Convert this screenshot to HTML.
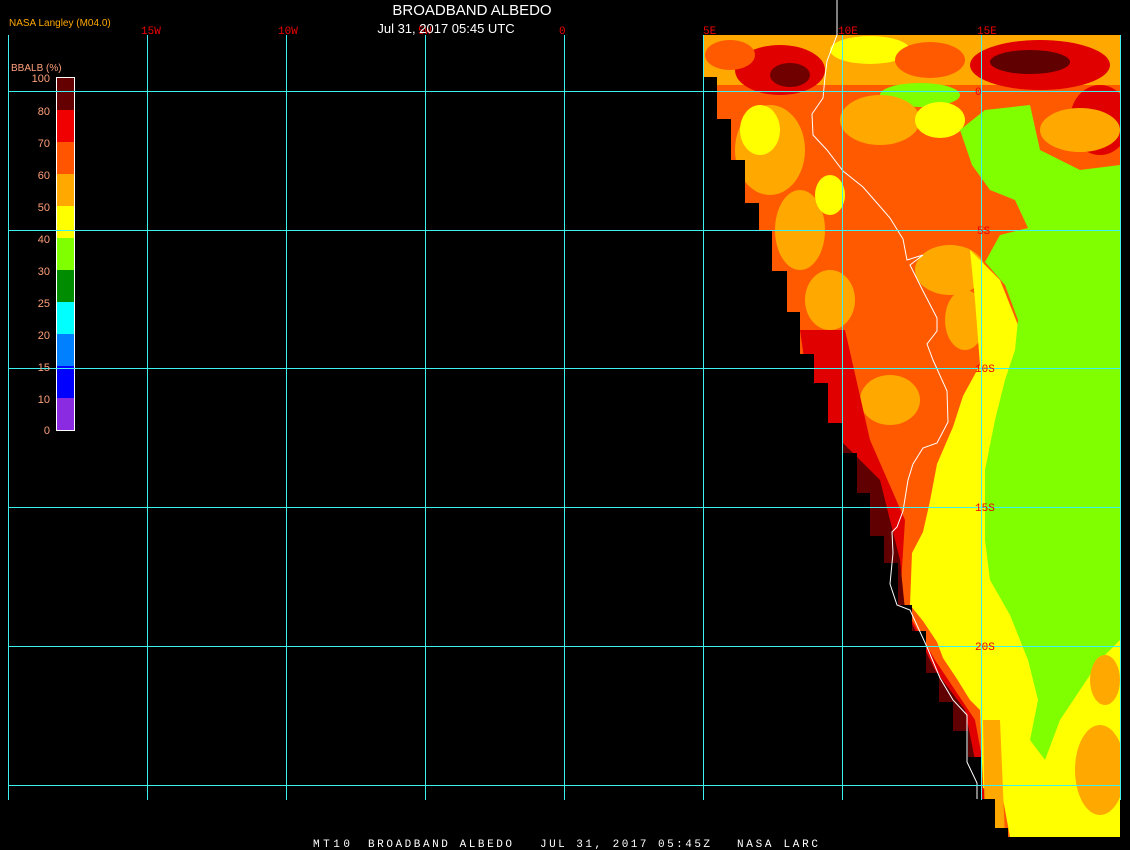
<!DOCTYPE html>
<html><head><meta charset="utf-8"><style>
html,body{margin:0;padding:0;background:#000;width:1130px;height:850px;overflow:hidden}
svg{display:block}
text{font-family:"Liberation Sans",sans-serif}
.m{font-family:"Liberation Mono",monospace}
</style></head><body>
<svg width="1130" height="850" viewBox="0 0 1130 850" xmlns="http://www.w3.org/2000/svg">
<rect width="1130" height="850" fill="#000"/>
<defs>
<clipPath id="land"><polygon points="703,35 703,77 717,77 717,119 731,119 731,160 745,160 745,203 759,203 759,230 772,230 772,271 787,271 787,312 800,312 800,354 814,354 814,383 828,383 828,423 843,423 843,453 857,453 857,493 870,493 870,536 884,536 884,563 898,563 898,605 912,605 912,631 926,631 926,673 939,673 939,702 953,702 953,731 968,731 968,757 981,757 981,799 995,799 995,828 1008,828 1008,837 1120,837 1120,35"/></clipPath>
</defs>
<g clip-path="url(#land)">
<rect x="700" y="35" width="420" height="802" fill="#ff5a00"/>
<rect x="700" y="35" width="420" height="50" fill="#ffa800"/>
<ellipse cx="780" cy="70" rx="45" ry="25" fill="#e00000"/>
<ellipse cx="790" cy="75" rx="20" ry="12" fill="#700000"/>
<ellipse cx="1040" cy="65" rx="70" ry="25" fill="#e00000"/>
<ellipse cx="1030" cy="62" rx="40" ry="12" fill="#600000"/>
<ellipse cx="1100" cy="120" rx="30" ry="35" fill="#e00000"/>
<ellipse cx="870" cy="50" rx="40" ry="14" fill="#ffff00"/>
<ellipse cx="730" cy="55" rx="25" ry="15" fill="#ff5a00"/>
<ellipse cx="930" cy="60" rx="35" ry="18" fill="#ff5a00"/>
<ellipse cx="920" cy="95" rx="40" ry="12" fill="#80ff00"/>
<ellipse cx="770" cy="150" rx="35" ry="45" fill="#ffa800"/>
<ellipse cx="760" cy="130" rx="20" ry="25" fill="#ffff00"/>
<ellipse cx="800" cy="230" rx="25" ry="40" fill="#ffa800"/>
<ellipse cx="830" cy="300" rx="25" ry="30" fill="#ffa800"/>
<ellipse cx="830" cy="195" rx="15" ry="20" fill="#ffff00"/>
<ellipse cx="880" cy="120" rx="40" ry="25" fill="#ffa800"/>
<ellipse cx="940" cy="120" rx="25" ry="18" fill="#ffff00"/>
<ellipse cx="950" cy="270" rx="35" ry="25" fill="#ffa800"/>
<ellipse cx="965" cy="320" rx="20" ry="30" fill="#ffa800"/>
<ellipse cx="890" cy="400" rx="30" ry="25" fill="#ffa800"/>
<polygon points="800,330 845,330 870,440 905,520 900,600 935,660 975,720 990,800 1000,837 940,837 850,480 810,400" fill="#e00000"/>
<polygon points="840,440 880,480 900,560 905,610 935,670 965,710 975,760 940,760 900,640 870,560 850,500" fill="#600000"/>
<polygon points="980,365 963,396 953,427 937,464 930,501 923,532 912,553 910,605 923,621 937,642 943,658 957,679 970,700 980,710 983,788 1003,799 1010,837 1120,837 1120,350 1040,340 1020,330 1000,280 970,250 975,300" fill="#ffff00"/>
<polygon points="983,720 1000,720 1005,837 985,837" fill="#ffa800"/>
<polygon points="960,130 985,110 1030,105 1040,150 1080,170 1120,165 1120,640 1100,660 1080,690 1060,720 1045,760 1030,740 1038,700 1028,660 1010,615 990,580 985,540 985,470 995,420 1005,380 1015,350 1018,320 1005,285 985,262 1000,235 1028,228 1015,200 990,190 972,165" fill="#80ff00"/>
<ellipse cx="1080" cy="130" rx="40" ry="22" fill="#ffa800"/>
<ellipse cx="1100" cy="770" rx="25" ry="45" fill="#ffa800"/>
<ellipse cx="1105" cy="680" rx="15" ry="25" fill="#ffa800"/>
</g>
<polyline fill="none" stroke="#fff" stroke-width="1" points="837,0 837,35 827,61 825,77 823,98 812,114 813,135 827,150 843,171 863,187 877,203 890,218 903,239 907,260 923,255 910,265 923,291 937,318 937,331 927,344 933,360 947,391 948,422 937,443 923,448 913,464 908,480 903,511 897,527 892,532 893,553 890,584 897,605 910,610 927,647 940,678 953,700 967,715 967,762 977,783 977,799"/>
<g stroke="#3ff0f0" stroke-width="1">
<line x1="8.5" y1="35" x2="8.5" y2="800"/>
<line x1="147.5" y1="35" x2="147.5" y2="800"/>
<line x1="286.5" y1="35" x2="286.5" y2="800"/>
<line x1="425.5" y1="35" x2="425.5" y2="800"/>
<line x1="564.5" y1="35" x2="564.5" y2="800"/>
<line x1="703.5" y1="35" x2="703.5" y2="800"/>
<line x1="842.5" y1="35" x2="842.5" y2="800"/>
<line x1="981.5" y1="35" x2="981.5" y2="800"/>
<line x1="1120.5" y1="35" x2="1120.5" y2="800"/>
<line x1="8" y1="91.5" x2="1120" y2="91.5"/>
<line x1="8" y1="230.5" x2="1120" y2="230.5"/>
<line x1="8" y1="368.5" x2="1120" y2="368.5"/>
<line x1="8" y1="507.5" x2="1120" y2="507.5"/>
<line x1="8" y1="646.5" x2="1120" y2="646.5"/>
<line x1="8" y1="785.5" x2="1120" y2="785.5"/>
</g>
<rect x="56" y="78" width="18" height="32" fill="#640000"/>
<rect x="56" y="110" width="18" height="32" fill="#f00000"/>
<rect x="56" y="142" width="18" height="32" fill="#ff5500"/>
<rect x="56" y="174" width="18" height="32" fill="#ffa800"/>
<rect x="56" y="206" width="18" height="32" fill="#ffff00"/>
<rect x="56" y="238" width="18" height="32" fill="#80ff00"/>
<rect x="56" y="270" width="18" height="32" fill="#008c00"/>
<rect x="56" y="302" width="18" height="32" fill="#00ffff"/>
<rect x="56" y="334" width="18" height="32" fill="#0080ff"/>
<rect x="56" y="366" width="18" height="32" fill="#0000ff"/>
<rect x="56" y="398" width="18" height="32" fill="#8a2be2"/>
<rect x="56.5" y="77.5" width="18" height="353" fill="none" stroke="#fff" stroke-width="1"/>
<line x1="8" y1="91.5" x2="75" y2="91.5" stroke="#3ff0f0"/>
<line x1="8" y1="230.5" x2="75" y2="230.5" stroke="#3ff0f0"/>
<line x1="8" y1="368.5" x2="75" y2="368.5" stroke="#3ff0f0"/>
<g fill="#ffa07a" font-size="11" text-anchor="end">
<text x="50" y="82">100</text><text x="50" y="115">80</text><text x="50" y="147">70</text>
<text x="50" y="179">60</text><text x="50" y="211">50</text><text x="50" y="243">40</text>
<text x="50" y="275">30</text><text x="50" y="307">25</text><text x="50" y="339">20</text>
<text x="50" y="371">15</text><text x="50" y="403">10</text><text x="50" y="434">0</text>
</g>
<text x="11" y="71" fill="#ffa07a" font-size="10">BBALB (%)</text>
<text x="9" y="26" fill="#ffa800" font-size="10">NASA Langley (M04.0)</text>
<text x="472" y="15" fill="#fff" font-size="15" text-anchor="middle">BROADBAND ALBEDO</text>
<g fill="#f00000" font-size="11">
<text x="141" y="34" class="m">15W</text><text x="278" y="34" class="m">10W</text>
<text x="418" y="34" class="m">5W</text><text x="559" y="34" class="m">0</text>
<text x="703" y="34" class="m">5E</text><text x="838" y="34" class="m">10E</text>
<text x="977" y="34" class="m">15E</text>
</g>
<text x="446" y="33" fill="#fff" font-size="13" text-anchor="middle">Jul 31, 2017 05:45 UTC</text>
<g fill="#f00000" font-size="11">
<text x="975" y="95" class="m">0</text>
<text x="977" y="234" class="m">5S</text>
<text x="975" y="372" class="m">10S</text>
<text x="975" y="511" class="m">15S</text>
<text x="975" y="650" class="m">20S</text>
</g>
<g fill="#fff" font-size="11">
<text x="313" y="847" class="m" textLength="37" lengthAdjust="spacing">MT10</text>
<text x="368" y="847" class="m" textLength="144" lengthAdjust="spacing">BROADBAND ALBEDO</text>
<text x="540" y="847" class="m" textLength="170" lengthAdjust="spacing">JUL 31, 2017 05:45Z</text>
<text x="737" y="847" class="m" textLength="81" lengthAdjust="spacing">NASA LARC</text>
</g>
</svg>
</body></html>
